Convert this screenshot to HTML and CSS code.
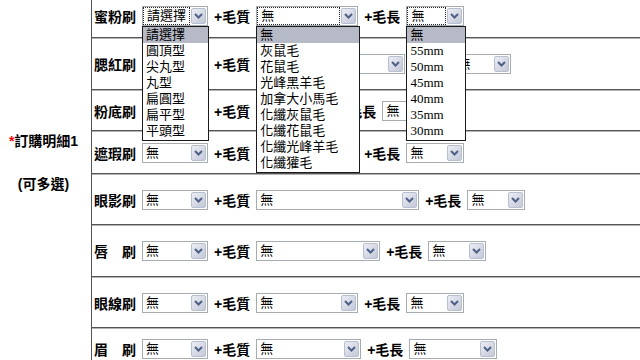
FILE: index.html
```html
<!DOCTYPE html>
<html lang="zh-Hant">
<head>
    <meta charset="UTF-8">
    <meta name="viewport" content="width=device-width, initial-scale=1.0">
    <title>訂購明細</title>
    <link rel="stylesheet" href="styles.css">
</head>
<body>
    <div class="page">
        <div class="side">
            <p class="req"><span class="star">*</span>訂購明細1</p>
            <p class="note">(可多選)</p>
        </div>

        <div class="rows">
            <!-- row 1: all three lists are open -->
            <div class="row r1">
                <span class="lbl">蜜粉刷</span>
                <div class="sel open w-type">
                    <span class="val">請選擇</span>
                    <span class="btn"><svg width="9" height="6" viewBox="0 0 9 6"><path d="M1 1l3.5 3.5L8 1" fill="none" stroke="#4d6185" stroke-width="2"/></svg></span>
                    <ul class="list l-type">
                        <li class="hl">請選擇</li>
                        <li>圓頂型</li>
                        <li>尖丸型</li>
                        <li>丸型</li>
                        <li>扁圓型</li>
                        <li>扁平型</li>
                        <li>平頭型</li>
                    </ul>
                </div>
                <span class="lbl">+毛質</span>
                <div class="sel open w-hair">
                    <span class="val">無</span>
                    <span class="btn"><svg width="9" height="6" viewBox="0 0 9 6"><path d="M1 1l3.5 3.5L8 1" fill="none" stroke="#4d6185" stroke-width="2"/></svg></span>
                    <ul class="list l-hair">
                        <li class="hl">無</li>
                        <li>灰鼠毛</li>
                        <li>花鼠毛</li>
                        <li>光峰黑羊毛</li>
                        <li>加拿大小馬毛</li>
                        <li>化纖灰鼠毛</li>
                        <li>化纖花鼠毛</li>
                        <li>化纖光峰羊毛</li>
                        <li>化纖獾毛</li>
                    </ul>
                </div>
                <span class="lbl">+毛長</span>
                <div class="sel open w-len">
                    <span class="val">無</span>
                    <span class="btn"><svg width="9" height="6" viewBox="0 0 9 6"><path d="M1 1l3.5 3.5L8 1" fill="none" stroke="#4d6185" stroke-width="2"/></svg></span>
                    <ul class="list l-len">
                        <li class="hl">無</li>
                        <li>55mm</li>
                        <li>50mm</li>
                        <li>45mm</li>
                        <li>40mm</li>
                        <li>35mm</li>
                        <li>30mm</li>
                    </ul>
                </div>
            </div>

            <div class="row r2">
                <span class="lbl">腮紅刷</span>
                <div class="sel w-type"><span class="val">無</span><span class="btn"><svg width="9" height="6" viewBox="0 0 9 6"><path d="M1 1l3.5 3.5L8 1" fill="none" stroke="#4d6185" stroke-width="2"/></svg></span></div>
                <span class="lbl">+毛質</span>
                <div class="sel w-hair-l"><span class="val">無</span><span class="btn"><svg width="9" height="6" viewBox="0 0 9 6"><path d="M1 1l3.5 3.5L8 1" fill="none" stroke="#4d6185" stroke-width="2"/></svg></span></div>
                <span class="lbl">+毛長</span>
                <div class="sel w-len"><span class="val">無</span><span class="btn"><svg width="9" height="6" viewBox="0 0 9 6"><path d="M1 1l3.5 3.5L8 1" fill="none" stroke="#4d6185" stroke-width="2"/></svg></span></div>
            </div>

            <div class="row r3">
                <span class="lbl">粉底刷</span>
                <div class="sel w-type"><span class="val">無</span><span class="btn"><svg width="9" height="6" viewBox="0 0 9 6"><path d="M1 1l3.5 3.5L8 1" fill="none" stroke="#4d6185" stroke-width="2"/></svg></span></div>
                <span class="lbl">+毛質</span>
                <div class="sel w-hair-s"><span class="val">無</span><span class="btn"><svg width="9" height="6" viewBox="0 0 9 6"><path d="M1 1l3.5 3.5L8 1" fill="none" stroke="#4d6185" stroke-width="2"/></svg></span></div>
                <span class="lbl">+毛長</span>
                <div class="sel w-len"><span class="val">無</span><span class="btn"><svg width="9" height="6" viewBox="0 0 9 6"><path d="M1 1l3.5 3.5L8 1" fill="none" stroke="#4d6185" stroke-width="2"/></svg></span></div>
            </div>

            <div class="row r4">
                <span class="lbl">遮瑕刷</span>
                <div class="sel w-type"><span class="val">無</span><span class="btn"><svg width="9" height="6" viewBox="0 0 9 6"><path d="M1 1l3.5 3.5L8 1" fill="none" stroke="#4d6185" stroke-width="2"/></svg></span></div>
                <span class="lbl">+毛質</span>
                <div class="sel w-hair"><span class="val">無</span><span class="btn"><svg width="9" height="6" viewBox="0 0 9 6"><path d="M1 1l3.5 3.5L8 1" fill="none" stroke="#4d6185" stroke-width="2"/></svg></span></div>
                <span class="lbl">+毛長</span>
                <div class="sel w-len"><span class="val">無</span><span class="btn"><svg width="9" height="6" viewBox="0 0 9 6"><path d="M1 1l3.5 3.5L8 1" fill="none" stroke="#4d6185" stroke-width="2"/></svg></span></div>
            </div>

            <div class="row r5">
                <span class="lbl">眼影刷</span>
                <div class="sel w-type"><span class="val">無</span><span class="btn"><svg width="9" height="6" viewBox="0 0 9 6"><path d="M1 1l3.5 3.5L8 1" fill="none" stroke="#4d6185" stroke-width="2"/></svg></span></div>
                <span class="lbl">+毛質</span>
                <div class="sel w-hair-xl"><span class="val">無</span><span class="btn"><svg width="9" height="6" viewBox="0 0 9 6"><path d="M1 1l3.5 3.5L8 1" fill="none" stroke="#4d6185" stroke-width="2"/></svg></span></div>
                <span class="lbl">+毛長</span>
                <div class="sel w-len"><span class="val">無</span><span class="btn"><svg width="9" height="6" viewBox="0 0 9 6"><path d="M1 1l3.5 3.5L8 1" fill="none" stroke="#4d6185" stroke-width="2"/></svg></span></div>
            </div>

            <div class="row r6">
                <span class="lbl">唇　刷</span>
                <div class="sel w-type"><span class="val">無</span><span class="btn"><svg width="9" height="6" viewBox="0 0 9 6"><path d="M1 1l3.5 3.5L8 1" fill="none" stroke="#4d6185" stroke-width="2"/></svg></span></div>
                <span class="lbl">+毛質</span>
                <div class="sel w-hair-m"><span class="val">無</span><span class="btn"><svg width="9" height="6" viewBox="0 0 9 6"><path d="M1 1l3.5 3.5L8 1" fill="none" stroke="#4d6185" stroke-width="2"/></svg></span></div>
                <span class="lbl">+毛長</span>
                <div class="sel w-len"><span class="val">無</span><span class="btn"><svg width="9" height="6" viewBox="0 0 9 6"><path d="M1 1l3.5 3.5L8 1" fill="none" stroke="#4d6185" stroke-width="2"/></svg></span></div>
            </div>

            <div class="row r7">
                <span class="lbl">眼線刷</span>
                <div class="sel w-type"><span class="val">無</span><span class="btn"><svg width="9" height="6" viewBox="0 0 9 6"><path d="M1 1l3.5 3.5L8 1" fill="none" stroke="#4d6185" stroke-width="2"/></svg></span></div>
                <span class="lbl">+毛質</span>
                <div class="sel w-hair"><span class="val">無</span><span class="btn"><svg width="9" height="6" viewBox="0 0 9 6"><path d="M1 1l3.5 3.5L8 1" fill="none" stroke="#4d6185" stroke-width="2"/></svg></span></div>
                <span class="lbl">+毛長</span>
                <div class="sel w-len"><span class="val">無</span><span class="btn"><svg width="9" height="6" viewBox="0 0 9 6"><path d="M1 1l3.5 3.5L8 1" fill="none" stroke="#4d6185" stroke-width="2"/></svg></span></div>
            </div>

            <div class="row r8">
                <span class="lbl">眉　刷</span>
                <div class="sel w-type"><span class="val">無</span><span class="btn"><svg width="9" height="6" viewBox="0 0 9 6"><path d="M1 1l3.5 3.5L8 1" fill="none" stroke="#4d6185" stroke-width="2"/></svg></span></div>
                <span class="lbl">+毛質</span>
                <div class="sel w-hair-b"><span class="val">無</span><span class="btn"><svg width="9" height="6" viewBox="0 0 9 6"><path d="M1 1l3.5 3.5L8 1" fill="none" stroke="#4d6185" stroke-width="2"/></svg></span></div>
                <span class="lbl">+毛長</span>
                <div class="sel w-len-l"><span class="val">無</span><span class="btn"><svg width="9" height="6" viewBox="0 0 9 6"><path d="M1 1l3.5 3.5L8 1" fill="none" stroke="#4d6185" stroke-width="2"/></svg></span></div>
            </div>
        </div>
    </div>
</body>
</html>
```

FILE: styles.css
```css
/* order form: brush options table */
body {
    margin: 0;
    background: #fff;
    color: #000;
    font-family: "Liberation Sans", "Noto Sans CJK TC", sans-serif;
    overflow: hidden;
}
.page {
    display: flex;
    align-items: flex-start;
}

/* left label cell */
.side {
    width: 91px;
    flex: none;
    padding: 131px 4px 0 0;
    box-sizing: border-box;
    text-align: center;
    font-weight: bold;
    font-size: 14px;
    line-height: 20px;
}
.side p {
    margin: 0;
}
.side .note {
    margin-top: 23px;
}
.star {
    color: #f00;
}

/* right cells */
.rows {
    flex: 1;
    border-left: 1px solid #555;
}
.row {
    display: flex;
    align-items: center;
    gap: 6px;
    padding-left: 2px;
    box-sizing: border-box;
    border-top: 1px solid #b4b4b4;
    border-bottom: 1px solid #555;
}
.r1 { height: 38px; border-top: none; padding-bottom: 5px; }
.r2 { height: 52px; }
.r3 { height: 41px; }
.r4 { height: 43px; }
.r5 { height: 51px; }
.r6 { height: 52px; }
.r7 { height: 51px; }
.r8 { height: 40px; border-bottom: none; }

.lbl {
    font-weight: bold;
    font-size: 14px;
    white-space: nowrap;
}

/* select boxes */
.sel {
    position: relative;
    flex: none;
    height: 20px;
    box-sizing: border-box;
    border: 1px solid #a5acb2;
    background: #fff;
    display: flex;
    align-items: center;
    padding-left: 3px;
    font-family: "Liberation Serif", "Noto Sans CJK TC", serif;
    font-size: 13px;
}
.val {
    flex: 1;
    white-space: nowrap;
    line-height: 16px;
}
.btn {
    flex: none;
    width: 15px;
    height: 16px;
    margin-right: 1px;
    box-sizing: border-box;
    border: 1px solid #b9bfcf;
    border-radius: 2px;
    background: linear-gradient(135deg, #eceef5, #c3c8d8);
    display: flex;
    align-items: center;
    justify-content: center;
}
.open {
    padding-left: 0;
}
.open .val {
    align-self: stretch;
    border: 1px dotted #222;
    padding-left: 3px;
    margin-right: 1px;
    display: flex;
    align-items: center;
}

.w-type { width: 66px; }
.w-hair { width: 102px; }
.w-hair-l { width: 149px; }
.w-hair-s { width: 78px; }
.w-hair-xl { width: 163px; }
.w-hair-m { width: 124px; }
.w-hair-b { width: 105px; }
.w-len { width: 58px; }
.w-len-l { width: 88px; }

/* open dropdown lists */
.list {
    position: absolute;
    top: 19px;
    left: -1px;
    z-index: 10;
    margin: 0;
    padding: 0 0 1px;
    list-style: none;
    background: #fff;
    border: 1px solid #1b1b1b;
    box-sizing: border-box;
}
.list li {
    height: 16px;
    line-height: 16px;
    padding-left: 3px;
    white-space: nowrap;
}
.list .hl {
    background: #b6b9c6;
}
.l-type { width: 67px; }
.l-hair { width: 104px; }
.l-len { width: 60px; }
```
